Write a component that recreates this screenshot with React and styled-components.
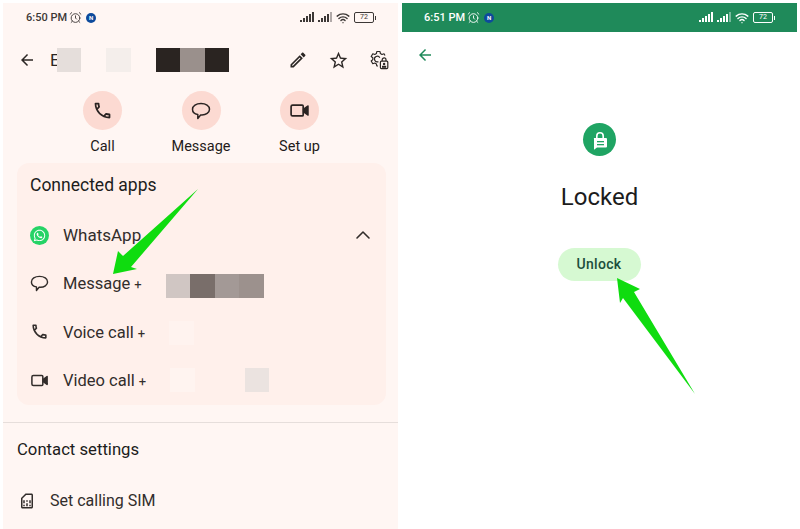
import React from 'react';
import styled, { createGlobalStyle } from 'styled-components';
import { MdArrowBack, MdOutlineCall, MdOutlineEdit, MdOutlineSimCard, MdStarBorder } from 'react-icons/md';
import { FaWhatsapp } from 'react-icons/fa';
import { Wifi, AlarmClock, ChevronUp } from 'lucide-react';

const Global = createGlobalStyle`
  html, body { margin: 0; padding: 0; background: #fff; }
  body { font-family: Roboto, "Liberation Sans", sans-serif; color: #1f1b1a; }
`;

const Bubble = ({ size = 20 }) => (
  <svg width={size} height={size} viewBox="0 0 20 20" fill="none" stroke="currentColor" strokeWidth="1.5" strokeLinejoin="round">
    <path d="M10 2.500c4.800 0 8.500 2.400 8.500 5.800s-3.700 5.700-7.500 5.700H9.600l-2.800 3.400v-3.800C3.400 13 1.500 11 1.500 8.300 1.500 4.900 5.200 2.500 10 2.500z" />
  </svg>
);

const VideoCam = ({ size = 20 }) => (
  <svg width={size} height={size} viewBox="0 0 20 20" fill="none" stroke="currentColor" strokeWidth="1.6" strokeLinejoin="round">
    <path d="M3.500 4.800h9a1 1 0 0 1 1 1v8.400a1 1 0 0 1-1 1h-9a1.500 1.500 0 0 1-1.500-1.500V6.300a1.500 1.500 0 0 1 1.500-1.500z" />
    <path d="M14 8.800l4-3v8.400l-4-3z" fill="currentColor" />
  </svg>
);

const GearLock = () => (
  <svg width="20" height="20" viewBox="0 0 20 20" fill="none" stroke="currentColor" strokeWidth="1.2" strokeLinejoin="round">
    <path d="M9 16H7.800l-.4-2.100-1.600-.9-2 .7L2.200 11l1.600-1.400V7.800L2.200 6.500l1.600-2.700 2 .7 1.600-.9L7.800 1.500h3.200l.4 2.100 1.600.9 2-.7 1 1.700" />
    <path d="M9.400 11.600a2.800 2.800 0 1 1 1.400-3.800" />
    <rect x="11.400" y="11.200" width="7.400" height="7.400" rx="1" />
    <path d="M13.200 11V9.800a1.900 1.900 0 0 1 3.800 0V11" />
    <circle cx="15.100" cy="14" r="1.200" fill="currentColor" stroke="none" />
    <rect x="13" y="15.800" width="4.200" height="2" fill="currentColor" stroke="none" />
  </svg>
);

const Signal = ({ faded }) => (
  <svg width="16" height="11" viewBox="0 0 16 11" fill="currentColor">
    <rect x="0" y="8" width="2" height="2" />
    <rect x="3" y="6" width="2" height="4" />
    <rect x="6" y="4" width="2" height="6" />
    <rect x="9" y="2" width="2" height="8" />
    <rect x="12" y="0" width="2" height="10" opacity={faded ? 0.4 : 1} />
  </svg>
);

const StatusBar = ({ time, dark, left }) => (
  <Status $dark={dark} $left={left}>
    <Time>{time}</Time>
    <AlarmClock size={13} strokeWidth={1.7} />
    <Badge>N</Badge>
    <StatusRight>
      <Signal />
      <Signal faded />
      <Wifi size={14} strokeWidth={2.4} />
      <Battery>72</Battery>
    </StatusRight>
  </Status>
);

const AppRow = ({ icon, label, children }) => (
  <Row>
    <RowIcon>{icon}</RowIcon>
    <AppLabel>{label}</AppLabel>
    {children}
  </Row>
);

export default function App() {
  return (
    <Page>
      <Global />
      <Panel $bg="#fff6f3">
        <StatusBar time="6:50 PM" left={26} />
        <Header>
          <MdArrowBack size={18} />
          <NameRow>
            <Initial>E</Initial>
            <Block $c="#e5dedb" $ml={-3} />
            <Block $c="#f4eeeb" $ml={25} />
            <Block $c="#2a2421" $ml={25} />
            <Block $c="#9a908c" />
            <Block $c="#2a2421" />
          </NameRow>
          <HeaderIcons>
            <MdOutlineEdit size={20} />
            <MdStarBorder size={21} />
            <GearLock />
          </HeaderIcons>
        </Header>
        <Actions>
          <Action>
            <Circle><MdOutlineCall size={21} /></Circle>
            <ActionLabel>Call</ActionLabel>
          </Action>
          <Action>
            <Circle><Bubble size={20} /></Circle>
            <ActionLabel>Message</ActionLabel>
          </Action>
          <Action>
            <Circle><VideoCam size={21} /></Circle>
            <ActionLabel>Set up</ActionLabel>
          </Action>
        </Actions>
        <Card>
          <CardTitle>Connected apps</CardTitle>
          <AppRow icon={<WhatsDot><FaWhatsapp size={13} /></WhatsDot>} label="WhatsApp">
            <Chevron><ChevronUp size={24} strokeWidth={1.6} /></Chevron>
          </AppRow>
          <AppRow icon={<Bubble size={19} />} label={<SubLabel>Message <Plus>+</Plus></SubLabel>}>
            <Block $c="#d0c6c3" $ml={24} $mt={6} />
            <Block $c="#796e6a" $mt={6} />
            <Block $c="#a39996" $mt={6} />
            <Block $c="#9c918d" $mt={6} />
          </AppRow>
          <AppRow icon={<MdOutlineCall size={19} />} label={<SubLabel>Voice call <Plus>+</Plus></SubLabel>}>
            <Block $c="#fff3ef" $ml={24} $mt={2} />
          </AppRow>
          <AppRow icon={<VideoCam size={19} />} label={<SubLabel>Video call <Plus>+</Plus></SubLabel>}>
            <Block $c="#fff4f0" $ml={24} />
            <Block $c="#ebe3e0" $ml={50} />
          </AppRow>
        </Card>
        <Divider />
        <SectionTitle>Contact settings</SectionTitle>
        <SimRow>
          <MdOutlineSimCard size={18} />
          <RowLabel>Set calling SIM</RowLabel>
        </SimRow>
        <ArrowOverlay viewBox="0 0 395 526">
          <polygon points="195,186 128,264 134,266 110,271 115,248 120,253" />
        </ArrowOverlay>
      </Panel>
      <Panel $bg="#fff">
        <StatusBar time="6:51 PM" dark left={25} />
        <BackBar><MdArrowBack size={18} /></BackBar>
        <LockBody>
          <LockCircle>
            <svg width="18" height="20" viewBox="0 0 18 20" fill="#fff">
              <path d="M5 8V6a4 4 0 0 1 8 0v2h-1.600V6a2.400 2.400 0 0 0-4.800 0v2z" />
              <path d="M3 8h12a1 1 0 0 1 1 1v7.500a1 1 0 0 1-1 1H6l-3 2.300V9a1 1 0 0 1 0-1z" />
              <rect x="6" y="11" width="7" height="1.300" fill="#1fa463" />
              <rect x="6" y="14" width="7" height="1.300" fill="#1fa463" />
            </svg>
          </LockCircle>
          <LockTitle>Locked</LockTitle>
          <UnlockButton>Unlock</UnlockButton>
        </LockBody>
        <ArrowOverlay viewBox="0 0 395 526">
          <polygon points="215,275 238,286 232,289 293,391 221,295 218,300" />
        </ArrowOverlay>
      </Panel>
    </Page>
  );
}

const Page = styled.div`
  display: flex;
  justify-content: space-between;
  width: 800px;
  height: 529px;
  padding: 3px 3px 0 3px;
  box-sizing: border-box;
  overflow: hidden;
`;

const Panel = styled.div`
  position: relative;
  width: 395px;
  background: ${p => p.$bg};
`;

const ArrowOverlay = styled.svg`
  position: absolute;
  top: 0;
  left: 0;
  width: 100%;
  height: 100%;
  fill: #0fdc0f;
  pointer-events: none;
`;

const Status = styled.div`
  display: flex;
  align-items: center;
  gap: 2px;
  height: 29px;
  padding: 0 24px 0 ${p => p.$left - 3}px;
  box-sizing: border-box;
  background: ${p => (p.$dark ? '#1f8a5a' : 'transparent')};
  color: ${p => (p.$dark ? '#fff' : '#3d3836')};
  font-size: 11px;
  font-weight: 500;
`;

const Time = styled.span``;

const Badge = styled.span`
  width: 10px;
  height: 10px;
  margin-left: 2px;
  border-radius: 50%;
  background: #0d4a9c;
  color: #fff;
  font-size: 6px;
  font-weight: 700;
  line-height: 10px;
  text-align: center;
`;

const StatusRight = styled.div`
  display: flex;
  align-items: center;
  gap: 2px;
  margin-left: auto;
`;

const Battery = styled.span`
  position: relative;
  width: 18px;
  height: 9px;
  margin-left: 2px;
  border: 1px solid currentColor;
  border-radius: 2px;
  font-size: 7px;
  font-weight: 400;
  line-height: 9px;
  text-align: center;

  &::after {
    content: '';
    position: absolute;
    top: 2.500px;
    right: -3px;
    width: 1.500px;
    height: 4px;
    background: currentColor;
  }
`;

const Header = styled.div`
  display: flex;
  align-items: center;
  height: 24px;
  margin-top: 16px;
  padding: 0 9px 0 15px;
  color: #2c2725;
`;

const NameRow = styled.div`
  display: flex;
  align-items: center;
  margin-left: 14px;
`;

const Initial = styled.span`
  font-size: 17px;
`;

const Block = styled.span`
  flex: none;
  width: 24.500px;
  height: 24px;
  margin-left: ${p => p.$ml || 0}px;
  margin-top: ${p => p.$mt || 0}px;
  background: ${p => p.$c};
`;

const HeaderIcons = styled.div`
  display: flex;
  align-items: center;
  gap: 20px;
  margin-left: auto;
  padding-left: 1px;
`;

const Actions = styled.div`
  display: flex;
  justify-content: center;
  margin-top: 19px;
  padding-left: 1px;
`;

const Action = styled.div`
  display: flex;
  flex-direction: column;
  align-items: center;
  width: 98.500px;
`;

const Circle = styled.div`
  display: flex;
  align-items: center;
  justify-content: center;
  width: 39px;
  height: 39px;
  border-radius: 50%;
  background: #fcdad2;
  color: #2a2322;
`;

const ActionLabel = styled.span`
  margin-top: 8px;
  font-size: 14.500px;
  line-height: 18px;
`;

const Card = styled.div`
  margin: 7px 12px 0 14px;
  height: 242px;
  padding: 12px 13px 0;
  box-sizing: border-box;
  border-radius: 12px;
  background: #fff0eb;
`;

const CardTitle = styled.div`
  font-size: 17.500px;
  line-height: 20px;
  margin-bottom: 16px;
  color: #201c1b;
`;

const Row = styled.div`
  display: flex;
  align-items: center;
  height: 48.300px;
  color: #322d2b;
`;

const RowIcon = styled.span`
  display: flex;
  align-items: center;
  width: 33px;
  flex: none;
`;

const RowLabel = styled.span`
  font-size: 16px;
  white-space: nowrap;
`;

const AppLabel = styled(RowLabel)`
  font-size: 17px;
`;

const SubLabel = styled.span`
  font-size: 16.500px;
`;

const Plus = styled.span`
  font-size: 13px;
`;

const WhatsDot = styled.span`
  display: flex;
  align-items: center;
  justify-content: center;
  width: 19px;
  height: 19px;
  border-radius: 50%;
  background: #25d366;
  color: #fff;
`;

const Chevron = styled.span`
  display: flex;
  margin-left: auto;
  margin-right: -2px;
`;

const Divider = styled.div`
  height: 1px;
  margin-top: 17px;
  background: #e6dedb;
`;

const SectionTitle = styled.div`
  margin: 17px 0 0 14px;
  font-size: 16.700px;
  line-height: 20px;
  color: #201c1b;
`;

const SimRow = styled.div`
  display: flex;
  align-items: center;
  gap: 14px;
  margin: 31px 0 0 15px;
  color: #322d2b;
`;

const BackBar = styled.div`
  display: flex;
  align-items: center;
  height: 46px;
  padding-left: 14px;
  color: #1f8a5a;
`;

const LockBody = styled.div`
  display: flex;
  flex-direction: column;
  align-items: center;
  padding-top: 45px;
`;

const LockCircle = styled.div`
  display: flex;
  align-items: center;
  justify-content: center;
  width: 33px;
  height: 33px;
  border-radius: 50%;
  background: #1fa463;
`;

const LockTitle = styled.div`
  margin-top: 25px;
  font-size: 24px;
  line-height: 32px;
  color: #1c1c1c;
`;

const UnlockButton = styled.button`
  width: 83px;
  height: 33px;
  margin: 35px 1px 0 0;
  padding: 0 0 1px;
  border: 0;
  border-radius: 17px;
  background: #d6f9d2;
  color: #1c4f3c;
  font-family: Roboto, sans-serif;
  font-size: 14px;
  font-weight: 500;
  letter-spacing: 0.3px;
`;
